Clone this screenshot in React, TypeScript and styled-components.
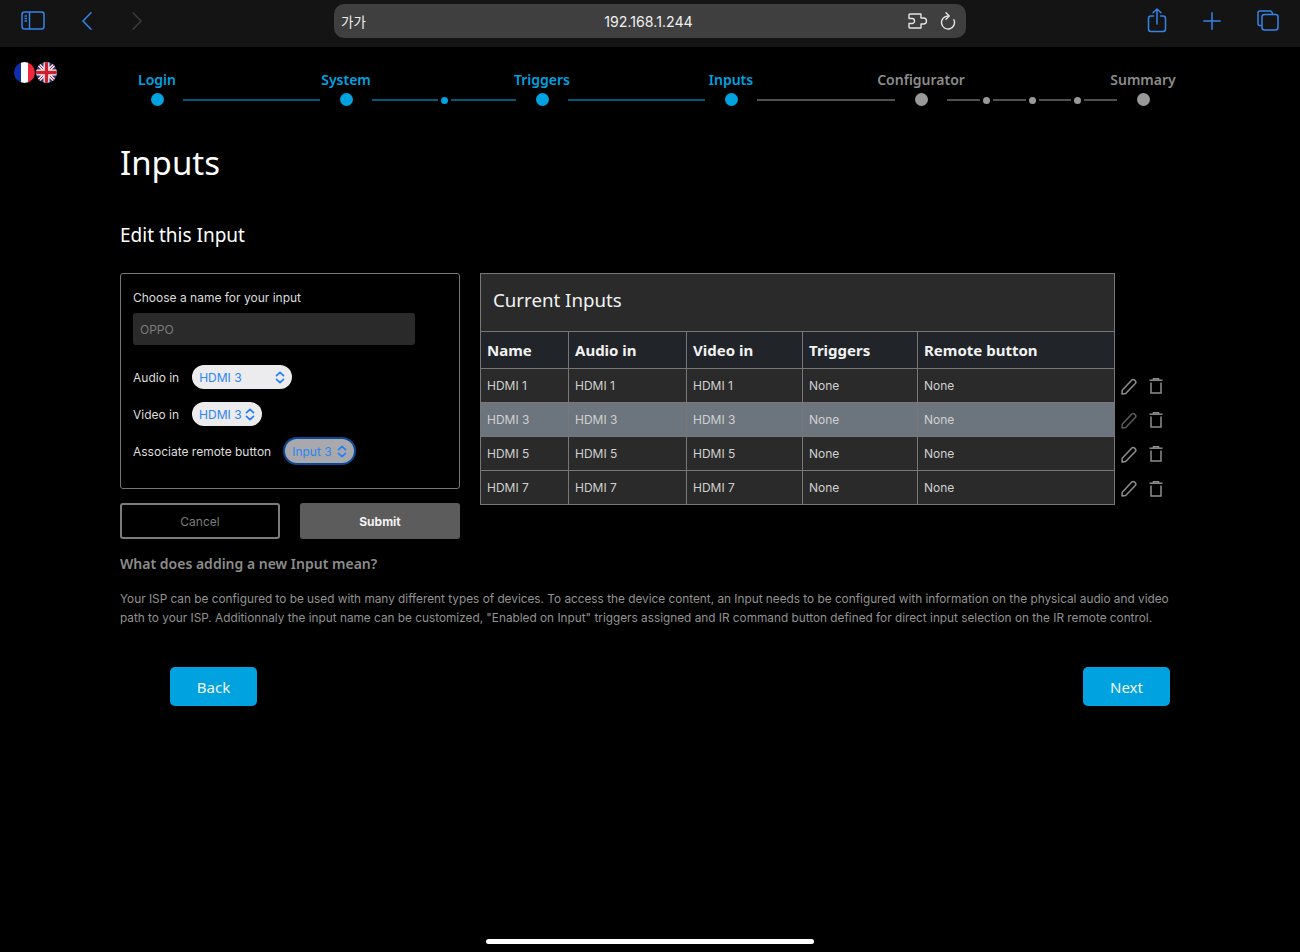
import { Fragment } from 'react';
import { createGlobalStyle, styled } from 'styled-components';

const FONT = '"Noto Sans", "Open Sans", sans-serif';
const BODY_FONT = 'Inter, "Noto Sans", sans-serif';
const BLUE = '#00a3e0';
const TOOL_BLUE = '#3483e8';

type StepItem = {
  label: string;
  active: boolean;
  subDots: number;
  lineWidth: number;
};

type InputRow = {
  name: string;
  selected?: boolean;
};

const STEPS: StepItem[] = [
  { label: 'Login', active: true, subDots: 0, lineWidth: 137 },
  { label: 'System', active: true, subDots: 1, lineWidth: 144 },
  { label: 'Triggers', active: true, subDots: 0, lineWidth: 137 },
  { label: 'Inputs', active: true, subDots: 0, lineWidth: 138 },
  { label: 'Configurator', active: false, subDots: 3, lineWidth: 170 },
  { label: 'Summary', active: false, subDots: 0, lineWidth: 0 },
];

const COLUMN_WIDTHS = [88, 118, 116, 115, 197];

const ROWS: InputRow[] = [
  { name: 'HDMI 1' },
  { name: 'HDMI 3', selected: true },
  { name: 'HDMI 5' },
  { name: 'HDMI 7' },
];

const Chevrons = () => (
  <svg width="10" height="13" viewBox="0 0 10 13" fill="none" stroke="#1f7fff" strokeWidth="1.7" strokeLinecap="round" strokeLinejoin="round">
    <path d="M1.5 4.6 L5 1.4 L8.5 4.6" />
    <path d="M1.5 8.4 L5 11.6 L8.5 8.4" />
  </svg>
);

const PencilIcon = ({ dim }: { dim?: boolean }) => (
  <svg width="16" height="17" viewBox="0 0 16 17" fill="none" stroke={dim ? '#5c5c5c' : '#8e8e8e'} strokeWidth="1.5" strokeLinejoin="round">
    <path d="M1.2 12.2 L10.8 2 Q12 0.9 13.3 1.9 L14.4 3 Q15.4 4.2 14.3 5.4 L4.7 15.4 L1 16 Z" />
  </svg>
);

const TrashIcon = () => (
  <svg width="14" height="16" viewBox="0 0 14 16" fill="none" stroke="#8e8e8e" strokeWidth="1.5">
    <path d="M0.5 2.2 H13.5" />
    <path d="M4.5 2 V0.8 H9.5 V2" />
    <path d="M2 4.5 V15 H12 V4.5" />
  </svg>
);

const App = () => (
  <>
    <GlobalStyle />
    <Page>
      <BrowserBar>
        <ToolGroup>
          <svg width="24" height="19" viewBox="0 0 24 19" fill="none" stroke={TOOL_BLUE} strokeWidth="1.5">
            <rect x="1" y="1" width="22" height="17" rx="2.5" />
            <path d="M8.5 1 V18" />
            <path d="M3.5 5 H6 M3.5 7.5 H6 M3.5 10 H6" />
          </svg>
          <BackIcon width="12" height="20" viewBox="0 0 12 20" fill="none" stroke={TOOL_BLUE} strokeWidth="1.6" strokeLinecap="round" strokeLinejoin="round">
            <path d="M10 1.8 L2 10 L10 18.2" />
          </BackIcon>
          <ForwardIcon width="12" height="20" viewBox="0 0 12 20" fill="none" stroke="#3a3a3a" strokeWidth="1.6" strokeLinecap="round" strokeLinejoin="round">
            <path d="M2 1.8 L10 10 L2 18.2" />
          </ForwardIcon>
        </ToolGroup>
        <AddressBar>
          <TextSize>가가</TextSize>
          <Address>192.168.1.244</Address>
          <AddressIcons>
            <svg width="20" height="16" viewBox="0 0 20 16" fill="none" stroke="#e4e4e4" strokeWidth="1.4" strokeLinejoin="round">
              <path d="M2 1 H13 V5 H15.5 A3 3 0 0 1 15.5 11 H13 V15 H2 Q1 15 1 14 V10.5 H4 A2.5 2.5 0 0 0 4 5.5 H1 V2 Q1 1 2 1 Z" />
            </svg>
            <svg width="16" height="18" viewBox="0 0 16 18" fill="none" stroke="#e4e4e4" strokeWidth="1.4" strokeLinecap="round" strokeLinejoin="round">
              <path d="M8 4 A6.5 6.5 0 1 0 13.9 7.75" />
              <path d="M6 0.8 L9.2 4 L6 7.2" />
            </svg>
          </AddressIcons>
        </AddressBar>
        <ToolGroupRight>
          <svg width="20" height="26" viewBox="0 1 20 26" fill="none" stroke={TOOL_BLUE} strokeWidth="1.5" strokeLinecap="round" strokeLinejoin="round">
            <path d="M6.5 9 H4 Q1.5 9 1.5 11.5 V22 Q1.5 24.5 4 24.5 H16 Q18.5 24.5 18.5 22 V11.5 Q18.5 9 16 9 H13.5" />
            <path d="M10 17 V2 M6 5.8 L10 2 L14 5.8" />
          </svg>
          <svg width="18" height="18" viewBox="0 0 18 18" fill="none" stroke={TOOL_BLUE} strokeWidth="1.5" strokeLinecap="round">
            <path d="M9 0.8 V17.2 M0.8 9 H17.2" />
          </svg>
          <svg width="22" height="21" viewBox="0 0 22 21" fill="none" stroke={TOOL_BLUE} strokeWidth="1.5" strokeLinejoin="round">
            <path d="M4.5 15.5 H3 Q1 15.5 1 13.5 V3 Q1 1 3 1 H13 Q15 1 15.6 4" />
            <rect x="5" y="4.5" width="16" height="15.5" rx="2.5" />
          </svg>
        </ToolGroupRight>
      </BrowserBar>

      <TopRow>
        <Flags>
          <svg width="21" height="21" viewBox="0 0 21 21">
            <clipPath id="fr"><circle cx="10.5" cy="10.5" r="10.5" /></clipPath>
            <g clipPath="url(#fr)">
              <rect width="7" height="21" fill="#0f2fa8" />
              <rect x="7" width="7" height="21" fill="#ffffff" />
              <rect x="14" width="7" height="21" fill="#f0263c" />
            </g>
          </svg>
          <svg width="21" height="21" viewBox="0 0 21 21">
            <clipPath id="uk"><circle cx="10.5" cy="10.5" r="10.5" /></clipPath>
            <g clipPath="url(#uk)">
              <rect width="21" height="21" fill="#22357f" />
              <path d="M0 0 L21 21 M21 0 L0 21" stroke="#f0e8ea" strokeWidth="3.4" />
              <path d="M0 0 L21 21 M21 0 L0 21" stroke="#d0202f" strokeWidth="1" />
              <path d="M10.5 0 V21 M0 10.5 H21" stroke="#f4f4f4" strokeWidth="6" />
              <path d="M10.5 0 V21 M0 10.5 H21" stroke="#d0202f" strokeWidth="3.4" />
            </g>
          </svg>
        </Flags>
        <Stepper>
          {STEPS.map((step, index) => {
            const next = STEPS[index + 1];
            const lit = step.active && !!next?.active;
            return (
              <Fragment key={step.label}>
                <Step>
                  <StepLabel $active={step.active}>{step.label}</StepLabel>
                  <StepDot $active={step.active} />
                </Step>
                {next && (
                  <Connector $width={step.lineWidth}>
                    <ConnectorLine $active={lit} />
                    {Array.from({ length: step.subDots }).map((_, dot) => (
                      <Fragment key={dot}>
                        <SubDot $active={lit} />
                        <ConnectorLine $active={lit} />
                      </Fragment>
                    ))}
                  </Connector>
                )}
              </Fragment>
            );
          })}
        </Stepper>
      </TopRow>

      <Main>
        <PageTitle>Inputs</PageTitle>
        <SectionTitle>Edit this Input</SectionTitle>

        <Columns>
          <FormColumn>
            <FormCard>
              <FieldLabel>Choose a name for your input</FieldLabel>
              <NameInput>OPPO</NameInput>
              <SelectRow>
                <FieldLabel>Audio in</FieldLabel>
                <SelectPill $width={100}>
                  HDMI 3
                  <Chevrons />
                </SelectPill>
              </SelectRow>
              <SelectRow>
                <FieldLabel>Video in</FieldLabel>
                <SelectPill $width={70}>
                  HDMI 3
                  <Chevrons />
                </SelectPill>
              </SelectRow>
              <SelectRow>
                <FieldLabel>Associate remote button</FieldLabel>
                <SelectPill $width={69} $focused>
                  Input 3
                  <Chevrons />
                </SelectPill>
              </SelectRow>
            </FormCard>
            <ButtonRow>
              <CancelButton>Cancel</CancelButton>
              <SubmitButton>Submit</SubmitButton>
            </ButtonRow>
          </FormColumn>

          <TableColumn>
            <InputsTable>
              <colgroup>
                {COLUMN_WIDTHS.map((width) => (
                  <TableCol key={width} $width={width} />
                ))}
              </colgroup>
              <thead>
                <tr>
                  <TableTitle colSpan={5}>Current Inputs</TableTitle>
                </tr>
                <tr>
                  <HeadCell>Name</HeadCell>
                  <HeadCell>Audio in</HeadCell>
                  <HeadCell>Video in</HeadCell>
                  <HeadCell>Triggers</HeadCell>
                  <HeadCell>Remote button</HeadCell>
                </tr>
              </thead>
              <tbody>
                {ROWS.map((row) => (
                  <BodyRow key={row.name} $selected={row.selected}>
                    <BodyCell>{row.name}</BodyCell>
                    <BodyCell>{row.name}</BodyCell>
                    <BodyCell>{row.name}</BodyCell>
                    <BodyCell>None</BodyCell>
                    <BodyCell>None</BodyCell>
                  </BodyRow>
                ))}
              </tbody>
            </InputsTable>
            <RowActions>
              {ROWS.map((row) => (
                <RowAction key={row.name}>
                  <PencilIcon dim={row.selected} />
                  <TrashIcon />
                </RowAction>
              ))}
            </RowActions>
          </TableColumn>
        </Columns>

        <HelpTitle>What does adding a new Input mean?</HelpTitle>
        <HelpText>
          Your ISP can be configured to be used with many different types of devices. To access the device content, an Input needs to be configured with information on the physical audio and video path to your ISP. Additionnaly the input name can be customized, "Enabled on Input" triggers assigned and IR command button defined for direct input selection on the IR remote control.
        </HelpText>

        <NavRow>
          <NavButton>Back</NavButton>
          <NavButton>Next</NavButton>
        </NavRow>
      </Main>

      <HomeIndicator />
    </Page>
  </>
);

export default App;

const GlobalStyle = createGlobalStyle`
  html, body {
    margin: 0;
    padding: 0;
    background: #000;
  }
  * {
    box-sizing: border-box;
  }
`;

const Page = styled.div`
  width: 1300px;
  height: 952px;
  display: flex;
  flex-direction: column;
  overflow: hidden;
  background: #000;
  color: #fff;
  font-family: ${FONT};
`;

const BrowserBar = styled.header`
  height: 47px;
  flex: none;
  display: grid;
  grid-template-columns: 334px 632px 334px;
  align-items: center;
  background: #141414;
`;

const ToolGroup = styled.div`
  display: flex;
  align-items: center;
  padding-left: 21px;
  margin-top: -6px;
`;

const BackIcon = styled.svg`
  margin-left: 36px;
`;

const ForwardIcon = styled.svg`
  margin-left: 38px;
`;

const ToolGroupRight = styled.div`
  display: flex;
  align-items: center;
  justify-content: flex-end;
  gap: 36px;
  padding-right: 21px;
  margin-top: -6px;
`;

const AddressBar = styled.div`
  height: 34px;
  margin-top: -5px;
  display: grid;
  grid-template-columns: 1fr auto 1fr;
  align-items: center;
  padding: 0 10px 0 7px;
  border-radius: 10px;
  background: #3f3f3f;
`;

const TextSize = styled.span`
  font-family: "Noto Sans CJK KR", sans-serif;
  font-size: 13.5px;
  color: #f0f0f0;
`;

const Address = styled.span`
  font-family: ${BODY_FONT};
  font-size: 14.2px;
  color: #efefef;
`;

const AddressIcons = styled.div`
  display: flex;
  align-items: center;
  justify-content: flex-end;
  gap: 12px;
`;

const TopRow = styled.div`
  flex: none;
  height: 66px;
  display: flex;
`;

const Flags = styled.div`
  width: 131px;
  flex: none;
  display: flex;
  gap: 1px;
  padding: 15px 0 0 14px;
`;

const Stepper = styled.nav`
  display: flex;
  padding-top: 23px;
`;

const Step = styled.div`
  width: 52px;
  flex: none;
  display: flex;
  flex-direction: column;
  align-items: center;
  gap: 4px;
`;

const StepLabel = styled.span<{ $active: boolean }>`
  height: 19px;
  font-size: 14px;
  line-height: 19px;
  font-weight: 600;
  white-space: nowrap;
  color: ${(p) => (p.$active ? BLUE : '#8c8c8c')};
`;

const StepDot = styled.span<{ $active: boolean }>`
  width: 13px;
  height: 13px;
  border-radius: 50%;
  background: ${(p) => (p.$active ? BLUE : '#999')};
`;

const Connector = styled.div<{ $width: number }>`
  width: ${(p) => p.$width}px;
  flex: none;
  height: 2px;
  margin-top: 29px;
  display: flex;
  align-items: center;
`;

const ConnectorLine = styled.span<{ $active: boolean }>`
  flex: 1;
  height: 2px;
  background: ${(p) => (p.$active ? '#015a7c' : '#505050')};
`;

const SubDot = styled.span<{ $active: boolean }>`
  width: 7px;
  height: 7px;
  margin: 0 3px;
  border-radius: 50%;
  flex: none;
  background: ${(p) => (p.$active ? BLUE : '#999')};
`;

const Main = styled.main`
  flex: 1;
  display: flex;
  flex-direction: column;
  padding: 0 130px 0 120px;
`;

const PageTitle = styled.h1`
  margin: 30px 0 0;
  font-size: 33px;
  line-height: 40px;
  font-weight: 400;
`;

const SectionTitle = styled.h2`
  margin: 39px 0 0;
  font-size: 19px;
  line-height: 26px;
  font-weight: 400;
`;

const Columns = styled.div`
  margin-top: 25px;
  display: flex;
  gap: 20px;
`;

const FormColumn = styled.div`
  width: 340px;
  flex: none;
`;

const FormCard = styled.div`
  height: 216px;
  padding: 15px 12px;
  border: 1px solid #777;
  border-radius: 3px;
`;

const FieldLabel = styled.label`
  display: block;
  font-family: ${BODY_FONT};
  font-size: 12px;
  line-height: 17px;
  color: #ddd;
`;

const NameInput = styled.div`
  width: 282px;
  height: 32px;
  margin: 7px 0 20px;
  padding: 0 7px;
  display: flex;
  align-items: center;
  border-radius: 3px;
  background: #2a2a2a;
  color: #7c7c7c;
  font-family: ${BODY_FONT};
  font-size: 12px;
`;

const SelectRow = styled.div`
  display: flex;
  align-items: center;
  gap: 13px;
  height: 24px;
  margin-bottom: 13px;
`;

const SelectPill = styled.div<{ $width: number; $focused?: boolean }>`
  width: ${(p) => p.$width}px;
  height: 24px;
  margin-left: ${(p) => (p.$focused ? '1px' : '0')};
  padding: 0 7px;
  display: flex;
  align-items: center;
  justify-content: space-between;
  border-radius: 12px;
  font-family: ${BODY_FONT};
  font-size: 12px;
  color: #2a86f0;
  background: ${(p) => (p.$focused ? '#a9a9ad' : '#ececee')};
  box-shadow: ${(p) => (p.$focused ? '0 0 0 2px #0a4a94' : 'none')};
`;

const ButtonRow = styled.div`
  margin-top: 14px;
  display: flex;
  gap: 20px;
`;

const CancelButton = styled.div`
  width: 160px;
  height: 36px;
  display: flex;
  align-items: center;
  justify-content: center;
  border: 2px solid #7c7c7c;
  border-radius: 3px;
  font-family: ${BODY_FONT};
  font-size: 12px;
  color: #7c7c7c;
`;

const SubmitButton = styled.div`
  width: 160px;
  height: 36px;
  display: flex;
  align-items: center;
  justify-content: center;
  border-radius: 3px;
  background: #5c5c5c;
  font-family: ${BODY_FONT};
  font-size: 12px;
  font-weight: 700;
  color: #f2f2f2;
`;

const TableColumn = styled.div`
  display: flex;
  align-items: flex-start;
`;

const InputsTable = styled.table`
  width: 634px;
  table-layout: fixed;
  border-collapse: collapse;
  background: #2a2a2a;
`;

const TableCol = styled.col<{ $width: number }>`
  width: ${(p) => p.$width}px;
`;

const TableTitle = styled.th`
  height: 58px;
  padding: 0 12px 6px;
  border: 1px solid #777;
  text-align: left;
  font-size: 18.7px;
  font-weight: 400;
  color: #f2f2f2;
`;

const HeadCell = styled.th`
  height: 37px;
  padding: 0 6px;
  border: 1px solid #777;
  background: #212529;
  text-align: left;
  font-size: 15px;
  font-weight: 700;
  color: #f2f2f2;
`;

const BodyRow = styled.tr<{ $selected?: boolean }>`
  height: 34px;
  background: ${(p) => (p.$selected ? '#6c757d' : '#2a2a2a')};
`;

const BodyCell = styled.td`
  padding: 0 6px;
  border: 1px solid #777;
  font-family: ${BODY_FONT};
  font-size: 12px;
  color: #d0d0d0;
`;

const RowActions = styled.div`
  padding: 96px 0 0 6px;
`;

const RowAction = styled.div`
  height: 34.2px;
  display: flex;
  align-items: center;
  gap: 12px;
`;

const HelpTitle = styled.h3`
  margin: 15px 0 0;
  font-size: 14px;
  line-height: 19px;
  font-weight: 600;
  color: #8c8c8c;
`;

const HelpText = styled.p`
  margin: 17px 0 0;
  width: 1060px;
  font-family: ${BODY_FONT};
  font-size: 11.8px;
  line-height: 19px;
  color: #939393;
`;

const NavRow = styled.div`
  width: 1000px;
  margin: 39px 0 0 50px;
  display: flex;
  justify-content: space-between;
`;

const NavButton = styled.div`
  width: 87px;
  height: 39px;
  display: flex;
  align-items: center;
  justify-content: center;
  border-radius: 5px;
  background: ${BLUE};
  font-size: 15px;
  color: #f4f4f4;
`;

const HomeIndicator = styled.div`
  width: 328px;
  height: 5px;
  flex: none;
  margin: 0 auto 8px;
  border-radius: 3px;
  background: #fff;
`;
